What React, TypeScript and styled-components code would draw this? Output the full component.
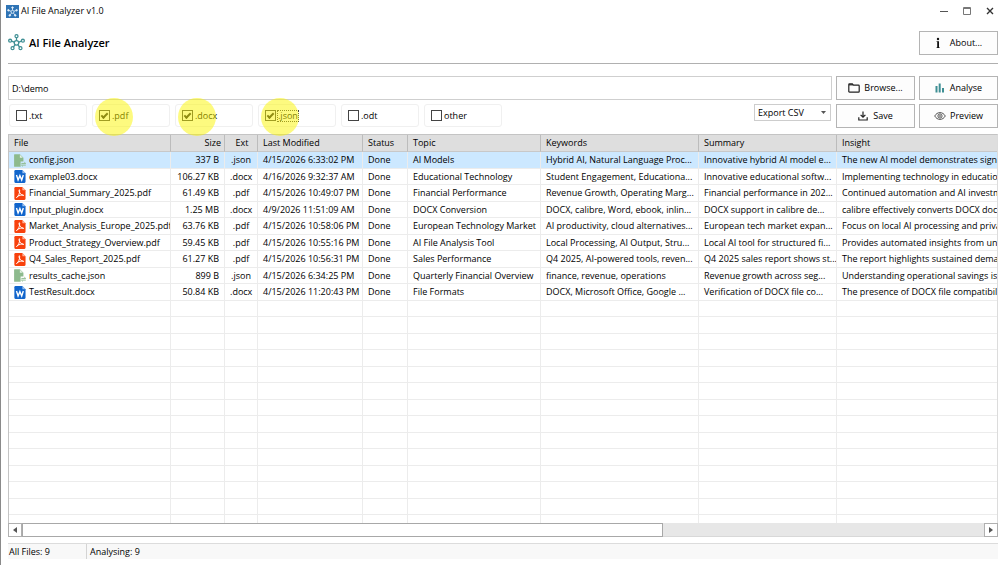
import React from "react";
import styled, { createGlobalStyle, css } from "styled-components";

const GlobalStyle = createGlobalStyle`
  *, *::before, *::after { box-sizing: border-box; }
  html, body { margin: 0; height: 100%; background: #fff; }
  body, button, input, select {
    font-family: "Open Sans", "Noto Sans", sans-serif;
    font-size: 9px;
    line-height: 14px;
    color: #000;
  }
`;

const Window = styled.div`
  display: flex;
  flex-direction: column;
  height: 100vh;
  min-height: 320px;
  padding: 0 7px 6px;
  border-left: 1px solid #8a8a8a;
  background: #fff;
  overflow: hidden;
`;

const TitleBar = styled.header`
  display: flex;
  align-items: center;
  justify-content: space-between;
  height: 22px;
  flex: none;
`;

const WindowTitle = styled.div`
  display: flex;
  align-items: center;
  gap: 2px;
  margin-left: -2px;
`;

const WindowControls = styled.div`
  display: flex;
  gap: 6px;
`;

const WindowButton = styled.button`
  display: grid;
  place-items: center;
  width: 17px;
  height: 17px;
  padding: 0;
  border: 0;
  background: none;
`;

const Banner = styled.div`
  display: flex;
  align-items: center;
  justify-content: space-between;
  flex: none;
  height: 42px;
  border-bottom: 1px solid #b0b0b0;
  margin-bottom: 12px;
`;

const Heading = styled.h1`
  display: flex;
  align-items: center;
  gap: 4px;
  margin: 0;
  font-size: 11px;
  line-height: 16px;
  font-weight: 600;
`;

const Toolbar = styled.div`
  display: grid;
  grid-template-columns: minmax(0, 1fr) 79px 79px;
  gap: 4px;
  flex: none;
  margin-bottom: 6px;
`;

const PushButton = styled.button<{ $gap?: number }>`
  display: flex;
  align-items: center;
  justify-content: center;
  gap: ${(p) => p.$gap ?? 4}px;
  width: 79px;
  height: 24px;
  padding: 0;
  border: 1px solid #b4b4b4;
  background: #fdfdfd;
`;

const PathInput = styled.input`
  width: 100%;
  height: 24px;
  padding: 0 3px;
  border: 1px solid #cfcfcf;
  outline: 0;
`;

const FilterRow = styled.div`
  display: flex;
  align-items: flex-start;
  justify-content: space-between;
  padding: 0 1px;
`;

const Filters = styled.div`
  display: flex;
  gap: 5px;
`;

const Filter = styled.label<{ $marked?: boolean }>`
  position: relative;
  display: flex;
  align-items: center;
  gap: 1px;
  width: 78px;
  height: 23px;
  padding: 0 6px;
  border: 1px solid #f0f0f0;
  border-radius: 3px;

  ${(p) =>
    p.$marked &&
    css`
      &::after {
        content: "";
        position: absolute;
        z-index: 2;
        left: 2px;
        top: -7px;
        width: 38px;
        height: 38px;
        border-radius: 50%;
        background: rgba(252, 246, 0, 0.5);
      }
    `}
`;

const FilterName = styled.span<{ $focused?: boolean }>`
  padding: 0 1px;
  line-height: 12px;
  outline: ${(p) => (p.$focused ? "1px dotted #444" : "0")};
  outline-offset: -1px;
`;

const Tick = styled.input`
  appearance: none;
  display: grid;
  place-items: center;
  width: 11px;
  height: 11px;
  margin: 0;
  border: 1px solid #444;
  background: #fff;

  &:checked::before {
    content: "";
    width: 7px;
    height: 4px;
    margin-top: -2px;
    border: solid #222;
    border-width: 0 0 2px 2px;
    transform: rotate(-45deg);
  }
`;

const SelectBox = styled.div`
  display: grid;
  align-items: center;
  width: 77px;

  > * { grid-area: 1 / 1; }
  > svg { justify-self: end; margin-right: 5px; pointer-events: none; }
`;

const Select = styled.select`
  appearance: none;
  width: 100%;
  height: 17px;
  padding: 0 3px;
  border: 1px solid #cdcdcd;
  border-radius: 0;
  background: #fff;
`;

const ListView = styled.section`
  display: flex;
  flex-direction: column;
  flex: 1;
  min-height: 0;
  border: 1px solid #c4c4c4;
  border-right-color: #dcdcdc;
`;

const Viewport = styled.div`
  flex: 1;
  min-height: 0;
  overflow: hidden;
`;

const Table = styled.table`
  width: 100%;
  table-layout: fixed;
  border-collapse: separate;
  border-spacing: 0;
`;

type Align = "left" | "right" | "center";

const HeadCell = styled.th<{ $align?: Align }>`
  height: 17px;
  padding: 0 3px 0 5px;
  border-right: 1px solid #bcbcbc;
  border-bottom: 1px solid #c8c8c8;
  background: #dedede;
  font-weight: 400;
  text-align: ${(p) => p.$align ?? "left"};
  &:last-child { border-right: 0; }
`;

const Row = styled.tr<{ $selected?: boolean }>`
  height: 17px;
  background: ${(p) => (p.$selected ? "#cce8ff" : "#fff")};
  &:nth-child(even) { height: 16px; }
`;

const Cell = styled.td<{ $align?: Align }>`
  padding: 0 5px;
  border-right: 1px solid #ececec;
  border-bottom: 1px solid #ececec;
  text-align: ${(p) => p.$align ?? "left"};
  white-space: nowrap;
  overflow: hidden;
  &:last-child { border-right: 0; padding-right: 0; }
`;

const FileName = styled.span`
  display: flex;
  align-items: center;
  gap: 3px;
  height: 14px;
  > svg { flex: none; }
`;

const ScrollBar = styled.div`
  display: flex;
  flex: none;
  height: 14px;
  margin: 0 -1px -1px;
  background: #e7e7e7;
  border-bottom: 1px solid #d8d8d8;
`;

const ScrollArrow = styled.button`
  display: grid;
  place-items: center;
  width: 14px;
  height: 14px;
  flex: none;
  padding: 0;
  border: 1px solid #b0b0b0;
  background: #fff;
`;

const ScrollTrack = styled.div`
  flex: 1;
`;

const ScrollThumb = styled.div`
  width: calc(100% * 2 / 3);
  height: 14px;
  border: 1px solid #a8a8a8;
  background: #fff;
`;

const StatusBar = styled.footer`
  display: flex;
  flex: none;
  height: 16px;
  margin-top: 6px;
  border-top: 1px solid #dcdcdc;
  background: #f8f8f8;
`;

const StatusPanel = styled.span`
  width: 78px;
  padding-left: 1px;
  line-height: 15px;
  & + & { width: auto; padding-left: 3px; border-left: 1px solid #d4d4d4; }
`;

const spokes = [
  [12, 3],
  [21, 9.5],
  [17.6, 20],
  [6.4, 20],
  [3, 9.5],
];

const Network = ({ size, color, stroke }: { size: number; color: string; stroke: number }) => (
  <svg width={size} height={size} viewBox="0 0 24 24" fill="none" stroke={color} strokeWidth={stroke} aria-hidden>
    {spokes.map(([x, y]) => (
      <g key={x}>
        <path d={`M${12 + (x - 12) * 0.36} ${12.5 + (y - 12.5) * 0.36}L${12 + (x - 12) * 0.78} ${12.5 + (y - 12.5) * 0.78}`} />
        <circle cx={x} cy={y} r="2.1" />
      </g>
    ))}
    <circle cx="12" cy="12.5" r="3.2" />
  </svg>
);

const AppIcon = () => (
  <svg width="13" height="13" viewBox="0 0 13 13" aria-hidden>
    <rect width="13" height="13" fill="#2f74b5" />
    <g stroke="#e4f0fa" strokeWidth="0.8" fill="#e4f0fa">
      <path d="M6.5 6.8V2.6M6.5 6.8L10.6 5.3M6.5 6.8L9.2 10.4M6.5 6.8L3.8 10.4M6.5 6.8L2.4 5.3" />
      <circle cx="6.5" cy="2.6" r=".8" />
      <circle cx="10.6" cy="5.3" r=".8" />
      <circle cx="9.2" cy="10.4" r=".8" />
      <circle cx="3.8" cy="10.4" r=".8" />
      <circle cx="2.4" cy="5.3" r=".8" />
      <circle cx="6.5" cy="6.8" r="1.5" fill="#2f74b5" />
    </g>
  </svg>
);

const InfoIcon = () => (
  <svg width="6" height="12" viewBox="0 0 6 12" fill="#111" aria-hidden>
    <circle cx="3" cy="2" r="1.2" />
    <path d="M1.6 4.2H4V10.2H4.6V11H1.6V10.2H2.2V5H1.6Z" />
  </svg>
);

const FolderIcon = () => (
  <svg width="12" height="10" viewBox="0 0 12 10" fill="none" stroke="#222" strokeWidth="1.2" aria-hidden>
    <path d="M.8 8.4V1.5q0-.6.6-.6H4.3L5.5 2.2H10.5q.7 0 .7.7V8.4q0 .7-.7.7H1.5q-.7 0-.7-.7Z" />
    <path d="M1 1.8H5" />
  </svg>
);

const ChartIcon = () => (
  <svg width="10" height="10" viewBox="0 0 10 10" aria-hidden>
    <rect x="0.5" y="3" width="2" height="6.5" fill="#3f8f94" />
    <rect x="3.7" y="0.5" width="2" height="9" fill="#3f8f94" />
    <rect x="7" y="5" width="2" height="4.5" fill="#3f8f94" />
  </svg>
);

const SaveIcon = () => (
  <svg width="10" height="10" viewBox="0 0 10 10" fill="none" stroke="#222" strokeWidth="1.2" aria-hidden>
    <path d="M5 .5V6M2.6 3.8L5 6.2L7.4 3.8M.8 6.3V9H9.2V6.3" />
  </svg>
);

const EyeIcon = () => (
  <svg width="12" height="10" viewBox="0 0 12 10" fill="none" stroke="#555" strokeWidth="1" aria-hidden>
    <path d="M.7 5C2 2.8 3.8 1.6 6 1.6S10 2.8 11.3 5C10 7.2 8.2 8.4 6 8.4S2 7.2.7 5Z" />
    <circle cx="6" cy="5" r="2.1" />
    <circle cx="6" cy="5" r=".5" />
  </svg>
);

type Kind = "json" | "docx" | "pdf";

const FileIcon = ({ kind }: { kind: Kind }) => {
  if (kind === "json")
    return (
      <svg width="12" height="13" viewBox="0.9 0.9 11.6 12.3" aria-hidden>
        <path d="M1.5 1H6.6L10 4.4V8H7.3V13H1.5Q1 13 1 12.5V1.5Q1 1 1.5 1Z" fill="#8dba8d" />
        <path d="M6.6 1.6V4.4H9.4Z" fill="#e3f0e3" />
        <path d="M8 9.9H12.2L10.9 8.7M12.3 11.5H8.1L9.4 12.7" fill="none" stroke="#8dba8d" strokeWidth=".9" />
      </svg>
    );
  if (kind === "docx")
    return (
      <svg width="12" height="13" viewBox="0.9 0.9 10.8 12.2" aria-hidden>
        <path d="M2 1H8.5L11.5 4V12Q11.5 13 10.5 13H2Q1 13 1 12V2Q1 1 2 1Z" fill="#1165cc" />
        <path d="M8.5 1V4H11.5Z" fill="#9cc3f0" />
        <path d="M3 5.6L4.5 10.3L6.2 6.2L7.9 10.3L9.4 5.6" fill="none" stroke="#fff" strokeWidth="1.3" />
      </svg>
    );
  return (
    <svg width="12" height="13" viewBox="0.9 0.9 10.8 12.2" aria-hidden>
      <path d="M2 1H8.5L11.5 4V12Q11.5 13 10.5 13H2Q1 13 1 12V2Q1 1 2 1Z" fill="#f8410c" />
      <path d="M8.5 1V4H11.5Z" fill="#ffb59c" />
      <path
        d="M3 10.8C4.8 9.6 6 7.2 6 4.2Q6 3.2 5.4 3.6C5 5.6 7 8.4 9.8 8.8C8 8 5 8.6 3 10.8Z"
        fill="none"
        stroke="#fff"
        strokeWidth=".9"
      />
    </svg>
  );
};

const columns: { name: string; width?: number; align?: Align }[] = [
  { name: "File", width: 162 },
  { name: "Size", width: 54, align: "right" },
  { name: "Ext", width: 33, align: "center" },
  { name: "Last Modified", width: 105 },
  { name: "Status", width: 45 },
  { name: "Topic", width: 133 },
  { name: "Keywords", width: 158 },
  { name: "Summary", width: 138 },
  { name: "Insight" },
];

const files: [string, string, Kind, string, string, string, string, string][] = [
  ["config.json", "337 B", "json", "4/15/2026 6:33:02 PM", "AI Models", "Hybrid AI, Natural Language Proc...", "Innovative hybrid AI model e...", "The new AI model demonstrates significant"],
  ["example03.docx", "106.27 KB", "docx", "4/16/2026 9:32:37 AM", "Educational Technology", "Student Engagement, Educationa...", "Innovative educational softw...", "Implementing technology in education"],
  ["Financial_Summary_2025.pdf", "61.49 KB", "pdf", "4/15/2026 10:49:07 PM", "Financial Performance", "Revenue Growth, Operating Marg...", "Financial performance in 202...", "Continued automation and AI investment"],
  ["Input_plugin.docx", "1.25 MB", "docx", "4/9/2026 11:51:09 AM", "DOCX Conversion", "DOCX, calibre, Word, ebook, inlin...", "DOCX support in calibre de...", "calibre effectively converts DOCX doc"],
  ["Market_Analysis_Europe_2025.pdf", "63.76 KB", "pdf", "4/15/2026 10:58:06 PM", "European Technology Market", "AI productivity, cloud alternatives...", "European tech market expan...", "Focus on local AI processing and privacy"],
  ["Product_Strategy_Overview.pdf", "59.45 KB", "pdf", "4/15/2026 10:55:16 PM", "AI File Analysis Tool", "Local Processing, AI Output, Stru...", "Local AI tool for structured fi...", "Provides automated insights from uns"],
  ["Q4_Sales_Report_2025.pdf", "61.27 KB", "pdf", "4/15/2026 10:56:31 PM", "Sales Performance", "Q4 2025, AI-powered tools, reven...", "Q4 2025 sales report shows st...", "The report highlights sustained demand"],
  ["results_cache.json", "899 B", "json", "4/15/2026 6:34:25 PM", "Quarterly Financial Overview", "finance, revenue, operations", "Revenue growth across seg...", "Understanding operational savings is k"],
  ["TestResult.docx", "50.84 KB", "docx", "4/15/2026 11:20:43 PM", "File Formats", "DOCX, Microsoft Office, Google ...", "Verification of DOCX file co...", "The presence of DOCX file compatibility"],
];

const blankRows = Array.from({ length: 14 }, (_, i) => i);

const filters = [
  { name: ".txt" },
  { name: ".pdf", on: true },
  { name: ".docx", on: true },
  { name: ".json", on: true, focused: true },
  { name: ".odt" },
  { name: "other" },
];

export default function App() {
  return (
    <>
      <GlobalStyle />
      <Window>
        <TitleBar>
          <WindowTitle>
            <AppIcon />
            AI File Analyzer v1.0
          </WindowTitle>
          <WindowControls>
            <WindowButton aria-label="Minimize">
              <svg width="8" height="8" stroke="#555"><path d="M0 4.5H8" /></svg>
            </WindowButton>
            <WindowButton aria-label="Maximize">
              <svg width="8" height="8" fill="none" stroke="#777"><path d="M.5 .5H7.5V7.5H.5ZM0 1.5H8" /></svg>
            </WindowButton>
            <WindowButton aria-label="Close">
              <svg width="8" height="8" stroke="#333" strokeWidth="1.4"><path d="M1 1L7 7M7 1L1 7" /></svg>
            </WindowButton>
          </WindowControls>
        </TitleBar>

        <Banner>
          <Heading>
            <Network size={17} color="#3f8f94" stroke={1.8} />
            AI File Analyzer
          </Heading>
          <PushButton $gap={9}><InfoIcon />About...</PushButton>
        </Banner>

        <Toolbar>
          <PathInput aria-label="Folder" defaultValue="D:\demo" />
          <PushButton><FolderIcon />Browse...</PushButton>
          <PushButton $gap={5}><ChartIcon />Analyse</PushButton>
          <FilterRow>
            <Filters>
              {filters.map((f) => (
                <Filter key={f.name} $marked={f.on}>
                  <Tick type="checkbox" defaultChecked={f.on} />
                  <FilterName $focused={f.focused}>{f.name}</FilterName>
                </Filter>
              ))}
            </Filters>
            <SelectBox>
              <Select aria-label="Export format">
                <option>Export CSV</option>
              </Select>
              <svg width="5" height="3" fill="#555"><path d="M0 0H5L2.5 3Z" /></svg>
            </SelectBox>
          </FilterRow>
          <PushButton $gap={5}><SaveIcon />Save</PushButton>
          <PushButton><EyeIcon />Preview</PushButton>
        </Toolbar>

        <ListView>
          <Viewport>
            <Table>
              <colgroup>
                {columns.map((c) => (
                  <col key={c.name} width={c.width} />
                ))}
              </colgroup>
              <thead>
                <tr>
                  {columns.map((c) => (
                    <HeadCell key={c.name} $align={c.align}>{c.name}</HeadCell>
                  ))}
                </tr>
              </thead>
              <tbody>
                {files.map(([name, size, kind, modified, topic, keywords, summary, insight], i) => (
                  <Row key={name} $selected={i === 0}>
                    <Cell><FileName><FileIcon kind={kind} />{name}</FileName></Cell>
                    <Cell $align="right">{size}</Cell>
                    <Cell $align="center">.{kind}</Cell>
                    <Cell>{modified}</Cell>
                    <Cell>Done</Cell>
                    <Cell>{topic}</Cell>
                    <Cell>{keywords}</Cell>
                    <Cell>{summary}</Cell>
                    <Cell>{insight}</Cell>
                  </Row>
                ))}
                {blankRows.map((n) => (
                  <Row key={n}>
                    {columns.map((c) => (
                      <Cell key={c.name} />
                    ))}
                  </Row>
                ))}
              </tbody>
            </Table>
          </Viewport>
          <ScrollBar>
            <ScrollArrow aria-label="Scroll left">
              <svg width="4" height="6" fill="#555"><path d="M4 0V6L0 3Z" /></svg>
            </ScrollArrow>
            <ScrollTrack><ScrollThumb /></ScrollTrack>
            <ScrollArrow aria-label="Scroll right">
              <svg width="4" height="6" fill="#555"><path d="M0 0V6L4 3Z" /></svg>
            </ScrollArrow>
          </ScrollBar>
        </ListView>

        <StatusBar>
          <StatusPanel>All Files: 9</StatusPanel>
          <StatusPanel>Analysing: 9</StatusPanel>
        </StatusBar>
      </Window>
    </>
  );
}
